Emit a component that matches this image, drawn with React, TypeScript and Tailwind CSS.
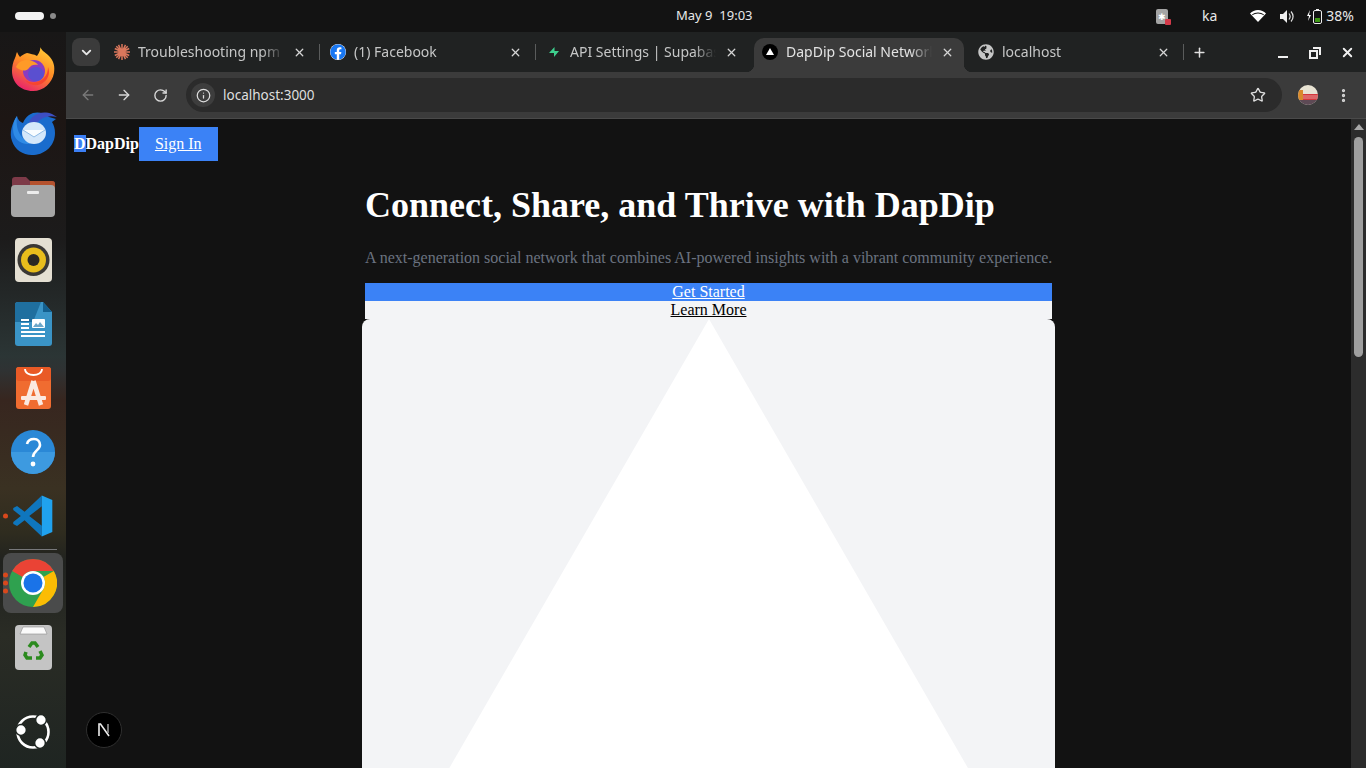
import React from 'react'
import { ArrowLeft, ArrowRight, RotateCw, Info, Star, EllipsisVertical, Plus, X, ChevronDown } from 'lucide-react'
import { FaFacebook, FaGlobeAmericas } from 'react-icons/fa'

const uiFont = "font-['Noto_Sans',sans-serif]"

function Firefox() {
  return (
    <svg width="44" height="46" viewBox="0 0 44 46">
      <defs>
        <linearGradient id="ff" x1="0.8" y1="0" x2="0.3" y2="1">
          <stop offset="0" stopColor="#ffd338" />
          <stop offset="0.5" stopColor="#ff8a25" />
          <stop offset="1" stopColor="#e8226c" />
        </linearGradient>
      </defs>
      <path d="M29 0c0 5 5 7 9 11 5 5 6 11 5 17-2 10-10 18-21 18C9 46 1 37 1 26c0-5 1-9 3-13 1-2 1-4 2-6 1 2 2 4 3 5 2-2 4-3 7-4 3 1 7 1 10 3 3-4 4-8 3-11z" fill="url(#ff)" />
      <circle cx="23" cy="26" r="11" fill="#8a3cc0" />
      <ellipse cx="25" cy="29" rx="8" ry="7" fill="#5a4fd0" />
      <path d="M5 22c3-7 11-8 16-6 3 1 5 2 6 4-4-1-7 0-9 3-3 4-9 3-13-1z" fill="#ff9a28" />
      <path d="M14 35c5 4 14 3 19-2 3-3 4-7 4-11 2 5 1 11-4 15-6 5-14 4-19-2z" fill="#f6452f" />
    </svg>
  )
}

function Thunderbird() {
  return (
    <svg width="48" height="48" viewBox="0 0 48 48">
      <path d="M8 8C3 15 0 25 3 33c3 9 12 15 22 14 12-1 21-10 21-22 0-4-1-8-3-11l4-3-7-2c-6-5-14-6-20-2-3 2-5 5-6 8-3-1-5-3-6-7z" fill="#1a6ccd" />
      <path d="M8 8c-1 8 0 14 4 20 3 4 7 6 11 7-7 3-15-1-18-8C3 21 4 13 8 8z" fill="#2f8be6" />
      <path d="M20 15c2-8 12-13 23-9l5 3c-8-2-15 0-19 5z" fill="#3d4fc4" />
      <ellipse cx="25" cy="25" rx="12" ry="11" fill="#d4e7fa" />
      <path d="M14 22l11 7 11-7" fill="#f8fcff" stroke="#8fbbe6" strokeWidth="1" />
    </svg>
  )
}

function Files() {
  return (
    <svg width="44" height="42" viewBox="0 0 44 42">
      <path d="M1 5a3 3 0 0 1 3-3h11l4 4h22a3 3 0 0 1 3 3v12H1z" fill="#7d3a48" />
      <path d="M19 6h22a3 3 0 0 1 3 3v8H19z" fill="#b5522e" />
      <rect x="0" y="10" width="44" height="32" rx="4" fill="#a6a6a6" />
      <rect x="16" y="16" width="12" height="3" rx="1" fill="#ececec" />
    </svg>
  )
}

function Rhythmbox() {
  return (
    <svg width="37" height="44" viewBox="0 0 37 44">
      <rect width="37" height="44" rx="4" fill="#e4dfd2" />
      <circle cx="18.500" cy="22" r="16" fill="#3a3835" />
      <circle cx="18.500" cy="22" r="12.500" fill="#e8bd1c" />
      <circle cx="18.500" cy="22" r="6" fill="#2a2823" />
    </svg>
  )
}

function Writer() {
  return (
    <svg width="37" height="44" viewBox="0 0 37 44">
      <path d="M3 0h25l9 10v31a3 3 0 0 1-3 3H3a3 3 0 0 1-3-3V3a3 3 0 0 1 3-3z" fill="#3a94c6" />
      <path d="M28 0l9 10h-9z" fill="#14608f" />
      <path d="M0 3a3 3 0 0 1 3-3h23l-8 20H0z" fill="#1f6f9f" />
      <rect x="6" y="17" width="8" height="2" fill="#fff" />
      <rect x="6" y="21" width="8" height="2" fill="#fff" />
      <rect x="6" y="25" width="8" height="2" fill="#fff" />
      <rect x="6" y="29" width="24" height="2" fill="#fff" />
      <rect x="6" y="33" width="24" height="2" fill="#fff" />
      <rect x="17" y="17" width="13" height="9" rx="1" fill="#fff" />
      <path d="M18 25l3-4 2 2 2-3 4 5z" fill="#6da7c9" />
    </svg>
  )
}

function AppCenter() {
  return (
    <svg width="35" height="42" viewBox="0 0 35 42">
      <rect width="35" height="42" rx="3" fill="#f06c30" />
      <rect width="35" height="14" rx="3" fill="#e95a26" />
      <path d="M9 2c0 8 17 8 17 0" fill="none" stroke="#fff" strokeWidth="1.800" />
      <path d="M17.500 14L10 38M17.500 14L25 38" stroke="#fbe9e0" strokeWidth="4.500" fill="none" />
      <rect x="5" y="29" width="25" height="4" rx="1" fill="#fbe9e0" />
    </svg>
  )
}

function Help() {
  return (
    <svg width="44" height="44" viewBox="0 0 44 44">
      <circle cx="22" cy="22" r="22" fill="#2a88d6" />
      <path d="M0 22a22 22 0 0 0 44 0z" fill="#3d9ae0" />
      <path d="M16 14c1-4 4-5 7-5 4 0 6 3 6 6 0 5-7 6-7 12" fill="none" stroke="#fff" strokeWidth="2.600" />
      <circle cx="22" cy="34" r="2.400" fill="#fff" />
    </svg>
  )
}

function VSCode() {
  return (
    <svg width="42" height="42" viewBox="0 0 100 100">
      <path d="M71 99L30 60 12 74 3 69V64l18-14L3 36v-5l9-5 18 14L71 1v26L41 50l30 23z" fill="#0f76bd" />
      <path d="M71 1l25 11v76L71 99z" fill="#20a2ee" />
    </svg>
  )
}

function Chrome() {
  return (
    <svg width="48" height="48" viewBox="0 0 48 48">
      <circle cx="24" cy="24" r="24" fill="#2fa14f" />
      <path d="M24 0a24 24 0 0 1 20.800 12H24a12 12 0 0 0-10.400 6L3.200 12A24 24 0 0 1 24 0z" fill="#ea4335" />
      <path d="M44.800 12A24 24 0 0 1 24 48l10.400-18A12 12 0 0 0 34.400 18z" fill="#fbbc04" />
      <circle cx="24" cy="24" r="12" fill="#fff" />
      <circle cx="24" cy="24" r="9.500" fill="#1a73e8" />
    </svg>
  )
}

function Trash() {
  return (
    <svg width="37" height="45" viewBox="0 0 37 45">
      <rect width="37" height="45" rx="4" fill="#c4c4c4" />
      <path d="M5 9l3-7h21l3 7z" fill="#fafafa" stroke="#8e8e8e" strokeWidth="0.600" />
      <g fill="none" stroke="#2b8a1e" strokeWidth="3.500">
        <path d="M14 22l3-4h3l3 4" />
        <path d="M11 27l-1 3 2 3h5" />
        <path d="M21 33h4l2-3-2-4" />
      </g>
    </svg>
  )
}

function Ubuntu() {
  return (
    <svg width="36" height="36" viewBox="0 0 36 36">
      <circle cx="18" cy="18" r="15.500" fill="none" stroke="#fff" strokeWidth="2.600" />
      <circle cx="6" cy="16" r="5.400" fill="#fff" stroke="#1f2622" strokeWidth="1.500" />
      <circle cx="26" cy="6" r="5.400" fill="#fff" stroke="#1f2622" strokeWidth="1.500" />
      <circle cx="25" cy="29" r="5.400" fill="#fff" stroke="#1f2622" strokeWidth="1.500" />
    </svg>
  )
}

function DockSlot({ children, pips = 0 }: { children: React.ReactNode; pips?: number }) {
  return (
    <div className="relative flex h-16 w-[66px] shrink-0 items-center justify-center">
      {pips > 0 && (
        <div className="absolute left-[3px] top-1/2 flex -translate-y-1/2 flex-col gap-[3px]">
          {Array.from({ length: pips }).map((_, i) => (
            <span key={i} className="h-[5px] w-[5px] rounded-full bg-[#d9481c]" />
          ))}
        </div>
      )}
      {children}
    </div>
  )
}

function Dock() {
  return (
    <aside className="flex w-[66px] shrink-0 flex-col items-center bg-[linear-gradient(180deg,#181717_0%,#1d1614_12%,#1c1b1b_28%,#2b3535_44%,#2f3233_46%,#37261f_50%,#3a3122_62%,#2f2c1f_68%,#20221f_72%,#2a2c25_82%,#1f2522_100%)] pt-[4px]">
      <DockSlot><Firefox /></DockSlot>
      <DockSlot><Thunderbird /></DockSlot>
      <DockSlot><Files /></DockSlot>
      <DockSlot><Rhythmbox /></DockSlot>
      <DockSlot><Writer /></DockSlot>
      <DockSlot><AppCenter /></DockSlot>
      <DockSlot><Help /></DockSlot>
      <DockSlot pips={1}><VSCode /></DockSlot>
      <div className="mb-[3px] mt-[1px] h-px w-12 bg-[#77787a]" />
      <div className="relative flex h-[60px] w-[60px] items-center justify-center rounded-lg bg-[#4a4b4b]">
        <div className="absolute left-0 top-1/2 flex -translate-y-1/2 flex-col gap-[3px]">
          <span className="h-[5px] w-[5px] rounded-full bg-[#d9481c]" />
          <span className="h-[5px] w-[5px] rounded-full bg-[#d9481c]" />
          <span className="h-[5px] w-[5px] rounded-full bg-[#d9481c]" />
        </div>
        <Chrome />
      </div>
      <div className="mt-[2px]"><DockSlot><Trash /></DockSlot></div>
      <div className="mt-auto mb-[18px]"><Ubuntu /></div>
    </aside>
  )
}

function SpikeIcon() {
  return (
    <svg width="16" height="16" viewBox="0 0 16 16" stroke="#d9775c" strokeWidth="1.500">
      <path d="M8 0v16M0 8h16M2.300 2.300l11.400 11.400M13.700 2.300L2.300 13.700M4.500 .8l7 14.400M11.500 .8l-7 14.400M.8 4.500l14.400 7M15.200 4.500l-14.400 7" />
    </svg>
  )
}

function Bolt() {
  return (
    <svg width="16" height="16" viewBox="0 0 16 16">
      <path d="M8.500 3L3 9h5v4l5-6H8.500z" fill="#3ecf8e" />
    </svg>
  )
}

function NextIcon() {
  return (
    <svg width="16" height="16" viewBox="0 0 16 16">
      <circle cx="8" cy="8" r="8" fill="#000" />
      <path d="M8 4l4 7H4z" fill="#fff" />
    </svg>
  )
}

function Tab({ icon, title, active, sep }: { icon: React.ReactNode; title: string; active?: boolean; sep?: boolean }) {
  return (
    <div className="relative h-[34px] w-[216px] shrink-0">
      <div className={`relative flex h-[34px] w-[210px] items-center pb-[6px] pl-2 ${active ? 'rounded-t-[10px] bg-[#3b3b3b]' : ''}`}>
        {active && (
          <>
            <span className="absolute -left-2 bottom-0 h-2 w-2 bg-[radial-gradient(circle_at_0_0,transparent_8px,#3b3b3b_8.5px)]" />
            <span className="absolute -right-2 bottom-0 h-2 w-2 bg-[radial-gradient(circle_at_100%_0,transparent_8px,#3b3b3b_8.5px)]" />
          </>
        )}
        <span className="flex w-4 shrink-0 justify-center">{icon}</span>
        <span className={`ml-2 w-[146px] overflow-hidden whitespace-nowrap text-sm [mask-image:linear-gradient(90deg,#000_85%,transparent)] ${active ? 'text-[#e3e3e3]' : 'text-[#c6c7c7]'}`}>
          {title}
        </span>
        <X size={13} strokeWidth={2.4} className="ml-[9px] shrink-0 text-[#d5d5d5]" />
      </div>
      {sep && <span className="absolute right-[2px] top-[6px] h-4 w-px bg-[#5a5c5c]" />}
    </div>
  )
}

function TopBar() {
  return (
    <header className={`relative flex h-8 shrink-0 items-center bg-[#131313] text-[13px] text-[#e8e8e8] ${uiFont}`}>
      <span className="ml-[15px] h-2 w-[29px] rounded-full bg-[#f3f3f3]" />
      <span className="ml-[6px] h-[6px] w-[6px] rounded-full bg-[#8a8a8a]" />
      <span className="absolute left-[676px] whitespace-pre">May 9  19:03</span>
      <div className="ml-auto flex items-center pr-3">
        <span className="relative mr-[34px] h-[15px] w-[12px] rounded-[2px] bg-[#a4a4a4] text-center text-[9px] leading-[15px] text-white">
          ✱
          <span className="absolute -bottom-[1px] -right-[3px] h-[6px] w-[6px] rounded-[1px] bg-[#d43a4a]" />
        </span>
        <span className="mr-[33px] text-sm">ka</span>
        <svg width="16" height="12" viewBox="0 0 16 12" className="mr-[14px]">
          <path d="M0 3.500C2 1.500 5 0 8 0s6 1.500 8 3.500L8 12z" fill="#fff" />
          <path d="M2.600 5.300C4 4.200 6 3.500 8 3.500s4 .7 5.400 1.800l.6-.7C12.400 3.300 10.300 2.500 8 2.500s-4.400.8-6 2.100z" fill="#131313" />
        </svg>
        <svg width="15" height="15" viewBox="0 0 15 15" className="mr-[11px]">
          <path d="M0 5h3l4-4v13l-4-4H0z" fill="#eee" />
          <path d="M9 4.500c1.300 1.700 1.300 4.300 0 6M11 2.500c2.500 3 2.500 7 0 10" fill="none" stroke="#ddd" strokeWidth="1.200" />
        </svg>
        <svg width="16" height="16" viewBox="0 0 16 16" className="mr-[4px]">
          <path d="M4 2L1 8h2l-1 5 3-6H3z" fill="#fff" />
          <rect x="7.500" y="2.500" width="8" height="13" rx="1.500" fill="none" stroke="#eee" />
          <rect x="10" y="1" width="3" height="1.500" fill="#eee" />
          <rect x="9" y="10" width="5" height="4" fill="#3f9a16" />
        </svg>
        <span className="text-sm">38%</span>
      </div>
    </header>
  )
}

function TabStrip() {
  return (
    <div className={`flex h-10 shrink-0 items-end bg-[#202222] pl-[6px] ${uiFont}`}>
      <div className="mb-[6px] mr-[6px] flex h-7 w-7 items-center justify-center rounded-lg bg-[#3b3b3b]">
        <ChevronDown size={15} strokeWidth={3} className="text-[#e8e8e8]" />
      </div>
      <Tab icon={<SpikeIcon />} title="Troubleshooting npm" sep />
      <Tab icon={<FaFacebook size={16} className="rounded-full bg-white text-[#1877f2]" />} title="(1) Facebook" sep />
      <Tab icon={<Bolt />} title="API Settings | Supabase" />
      <Tab icon={<NextIcon />} title="DapDip Social Network" active />
      <Tab icon={<FaGlobeAmericas size={16} className="text-[#c6c7c7]" />} title="localhost" sep />
      <Plus size={15} strokeWidth={2.4} className="mb-[12px] ml-[6px] text-[#e0e0e0]" />
      <div className="mb-[12px] ml-auto flex items-center pr-[11px] text-[#f0f0f0]">
        <span className="mr-[21px] mt-[9px] h-[2px] w-[10px] bg-current" />
        <svg width="12" height="12" viewBox="0 0 12 12" fill="none" stroke="currentColor" strokeWidth="2" className="mr-[19px]">
          <rect x="1" y="4" width="7" height="7" />
          <path d="M4 1h7v7" />
        </svg>
        <X size={15} strokeWidth={3} />
      </div>
    </div>
  )
}

function Avatar() {
  return (
    <svg width="20" height="20" viewBox="0 0 20 20" className="ml-4 rounded-full">
      <rect width="20" height="20" fill="#e8e3d3" />
      <rect x="0" y="5" width="5" height="10" fill="#d98a2b" />
      <rect x="5" y="9" width="15" height="6" fill="#d4383c" />
      <path d="M5 11h15M5 13h15" stroke="#f3d7d0" strokeWidth="0.600" />
      <rect x="0" y="15" width="20" height="5" fill="#5d4a55" />
    </svg>
  )
}

function Toolbar() {
  return (
    <div className={`flex h-[47px] shrink-0 items-center border-b border-[#4a4a4a] bg-[#3b3b3b] ${uiFont}`}>
      <ArrowLeft size={16} strokeWidth={2} className="ml-[14px] text-[#7a7a7a]" />
      <ArrowRight size={16} strokeWidth={2} className="ml-5 text-[#d8d8d8]" />
      <RotateCw size={15} strokeWidth={2.2} className="ml-[21px] text-[#d8d8d8]" />
      <div className="ml-[18px] flex h-[34px] w-[1096px] items-center rounded-full bg-[#2b2b2b] pl-[5px] pr-4">
        <span className="flex h-6 w-6 items-center justify-center rounded-full bg-[#3d3d3d]">
          <Info size={15} strokeWidth={2} className="text-[#dedede]" />
        </span>
        <span className="ml-2 text-[13.5px] text-[#dfdfdf]">localhost:3000</span>
        <Star size={16} strokeWidth={2} className="ml-auto text-[#dedede]" />
      </div>
      <Avatar />
      <EllipsisVertical size={17} strokeWidth={2.6} className="ml-[17px] text-[#d8d8d8]" />
    </div>
  )
}

function Page() {
  return (
    <div className="relative flex min-h-0 flex-1 bg-[#121212] font-['Liberation_Serif',serif]">
      <main className="min-w-0 flex-1 overflow-hidden">
        <nav className="flex h-[50px] items-center px-2">
          <span className="text-base font-bold text-white">
            <span className="bg-[#3b7ff5]">D</span>DapDip
          </span>
          <a href="#" className="flex h-[34px] items-center bg-[#3b82f6] px-4 text-base text-white underline">Sign In</a>
        </nav>
        <section className="mx-auto mt-[16px] w-[687px]">
          <h1 className="text-4xl font-bold leading-10 text-white">Connect, Share, and Thrive with DapDip</h1>
          <p className="mt-[21px] whitespace-nowrap text-base leading-6 text-[#6b7280]">
            A next-generation social network that combines AI-powered insights with a vibrant community experience.
          </p>
          <div className="mt-[13px] flex flex-col text-center text-base leading-[18px]">
            <a href="#" className="block bg-[#3b82f6] text-white underline">Get Started</a>
            <a href="#" className="block bg-[#f3f4f6] text-black underline">Learn More</a>
          </div>
          <div className="-mx-[3px] h-[600px] overflow-hidden rounded-lg bg-[#f3f4f6]">
            <svg width="693" height="600" viewBox="0 0 693 600">
              <path d="M347 0L693 600H0z" fill="#fff" />
            </svg>
          </div>
        </section>
      </main>
      <div className="flex w-[15px] shrink-0 flex-col items-center bg-[#2c2c2c]">
        <span className="mt-[5px] h-0 w-0 border-x-[5px] border-b-[6px] border-x-transparent border-b-[#a8a8a8]" />
        <span className="mt-[7px] h-[220px] w-[9px] rounded-full bg-[#9f9f9f]" />
      </div>
      <div className="absolute bottom-[20px] left-[20px] flex h-9 w-9 items-center justify-center rounded-full border border-[#2f2f2f] bg-black">
        <svg width="18" height="18" viewBox="0 0 18 18" fill="none">
          <path d="M4 15V3h1.500L14 15" stroke="#eee" strokeWidth="1.600" />
          <path d="M13 3v9" stroke="#999" strokeWidth="1.600" />
        </svg>
      </div>
    </div>
  )
}

export default function App() {
  return (
    <div className="flex h-[768px] w-[1366px] flex-col overflow-hidden bg-[#121212]">
      <TopBar />
      <div className="flex min-h-0 flex-1">
        <Dock />
        <div className="flex min-w-0 flex-1 flex-col">
          <TabStrip />
          <Toolbar />
          <Page />
        </div>
      </div>
    </div>
  )
}
